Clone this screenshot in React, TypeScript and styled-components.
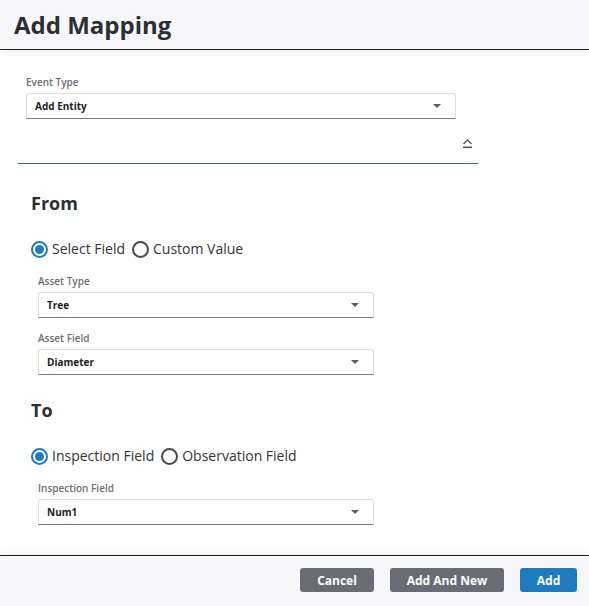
import React from "react"
import styled, { createGlobalStyle } from "styled-components"

const GlobalStyle = createGlobalStyle`
  html, body {
    margin: 0;
    padding: 0;
    background: #ffffff;
    font-family: "Open Sans", "Noto Sans", Arial, sans-serif;
    color: #212529;
  }
  * { box-sizing: border-box; }
`

const StyledPage = styled.div`
  height: 100vh;
  display: flex;
  flex-direction: column;
  overflow: hidden;
`

const StyledHeader = styled.header`
  height: 50px;
  flex-shrink: 0;
  display: flex;
  align-items: center;
  padding: 0 14px 0;
  background: #f7f7f9;
  border-bottom: 1.5px solid #1e2226;
  box-shadow: 0 3px 6px rgba(0, 0, 0, 0.06);
  position: relative;
  z-index: 1;
`

const StyledTitle = styled.h1`
  margin: 0;
  font-size: 24px;
  font-weight: 700;
  color: #2b2f33;
`

const StyledBody = styled.main`
  flex: 1;
  padding: 26px 0 0 0;
`

const StyledEventSection = styled.div`
  width: 456px;
  padding-left: 26px;
`

const StyledLabel = styled.div`
  font-size: 10px;
  font-weight: 600;
  color: #6e6e6e;
  line-height: 12px;
  margin-bottom: 5px;
`

const StyledSelect = styled.div<{ $width: number }>`
  width: ${props => props.$width}px;
  height: 26px;
  display: flex;
  align-items: center;
  justify-content: space-between;
  padding: 0 14px 0 8px;
  border: 1px solid #dcdcdc;
  border-bottom: 1px solid #7a7a7a;
  border-radius: 3px 3px 0 0;
  font-size: 10px;
  font-weight: 700;
  color: #222;
`

const StyledCaret = styled.span`
  width: 0;
  height: 0;
  border-left: 4.5px solid transparent;
  border-right: 4.5px solid transparent;
  border-top: 4.5px solid #5c5c5c;
`

const StyledCollapseRow = styled.div`
  width: 460px;
  margin: 17px 0 0 18px;
  height: 28px;
  display: flex;
  justify-content: flex-end;
  align-items: flex-start;
  padding: 2px 5px 0 0;
  border-bottom: 1px solid #2a73a8;
`

const StyledSection = styled.section`
  padding-left: 31px;
`

const StyledHeading = styled.h2<{ $top: number }>`
  margin: ${props => props.$top}px 0 0 0;
  font-size: 18px;
  font-weight: 700;
  line-height: 24px;
  color: #2b2f33;
`

const StyledRadioGroup = styled.div`
  display: flex;
  align-items: center;
  gap: 7px;
  margin-top: 24px;
  font-size: 14px;
  color: #333;
`

const StyledRadioOption = styled.label`
  display: flex;
  align-items: center;
  gap: 4px;
  line-height: 20px;
`

const StyledRadioCircle = styled.span<{ $checked: boolean }>`
  width: 17px;
  height: 17px;
  border-radius: 50%;
  border: 2px solid ${props => (props.$checked ? "#1f7bbf" : "#4a4a4a")};
  display: flex;
  align-items: center;
  justify-content: center;

  &::after {
    content: "";
    width: 9px;
    height: 9px;
    border-radius: 50%;
    background: ${props => (props.$checked ? "#1f7bbf" : "transparent")};
  }
`

const StyledFieldList = styled.div`
  padding-left: 7px;
  margin-top: 16px;
  display: flex;
  flex-direction: column;
  gap: 14px;
`

const StyledFooter = styled.footer`
  height: 51px;
  flex-shrink: 0;
  display: flex;
  align-items: center;
  justify-content: flex-end;
  gap: 16px;
  padding: 0 12px 2px 0;
  background: #f7f7f9;
  border-top: 1.5px solid #1e2226;
  box-shadow: 0 -4px 8px rgba(0, 0, 0, 0.05);
`

const StyledButton = styled.button<{ $primary?: boolean; $width: number }>`
  width: ${props => props.$width}px;
  height: 24px;
  border: none;
  border-radius: 3px;
  background: ${props => (props.$primary ? "#1f7bbf" : "#6a6c75")};
  color: #ffffff;
  font-family: inherit;
  font-size: 12px;
  font-weight: 700;
  cursor: pointer;
`

type FieldProps = { label: string; value: string; width: number }

const Field: React.FC<FieldProps> = ({ label, value, width }) => (
  <div>
    <StyledLabel>{label}</StyledLabel>
    <StyledSelect $width={width}>
      <span>{value}</span>
      <StyledCaret />
    </StyledSelect>
  </div>
)

type RadioProps = { options: string[]; selected: number }

const RadioGroup: React.FC<RadioProps> = ({ options, selected }) => (
  <StyledRadioGroup>
    {options.map((option, i) => (
      <StyledRadioOption key={option}>
        <StyledRadioCircle $checked={i === selected} />
        {option}
      </StyledRadioOption>
    ))}
  </StyledRadioGroup>
)

const CollapseIcon = () => (
  <svg width="11" height="11" viewBox="0 0 11 11">
    <path d="M1.5 6 L5.5 2 L9.5 6" fill="none" stroke="#555" strokeWidth="1.4" />
    <rect x="1" y="8.5" width="9" height="1.6" fill="#555" />
  </svg>
)

const App: React.FC = () => (
  <StyledPage>
    <GlobalStyle />
    <StyledHeader>
      <StyledTitle>Add Mapping</StyledTitle>
    </StyledHeader>
    <StyledBody>
      <StyledEventSection>
        <Field label="Event Type" value="Add Entity" width={430} />
      </StyledEventSection>
      <StyledCollapseRow>
        <CollapseIcon />
      </StyledCollapseRow>
      <StyledSection>
        <StyledHeading $top={27}>From</StyledHeading>
        <RadioGroup options={["Select Field", "Custom Value"]} selected={0} />
        <StyledFieldList>
          <Field label="Asset Type" value="Tree" width={336} />
          <Field label="Asset Field" value="Diameter" width={336} />
        </StyledFieldList>
        <StyledHeading $top={23}>To</StyledHeading>
        <RadioGroup options={["Inspection Field", "Observation Field"]} selected={0} />
        <StyledFieldList>
          <Field label="Inspection Field" value="Num1" width={336} />
        </StyledFieldList>
      </StyledSection>
    </StyledBody>
    <StyledFooter>
      <StyledButton $width={74}>Cancel</StyledButton>
      <StyledButton $width={114}>Add And New</StyledButton>
      <StyledButton $width={57} $primary>
        Add
      </StyledButton>
    </StyledFooter>
  </StyledPage>
)

export default App
